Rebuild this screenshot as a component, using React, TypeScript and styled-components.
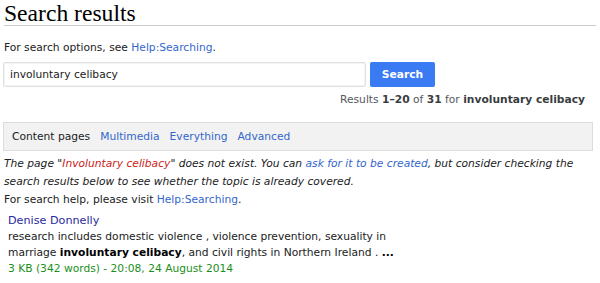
import React from "react";
import styled, { createGlobalStyle } from "styled-components";

const Global = createGlobalStyle`
  html, body { margin: 0; padding: 0; background: #fff; }
  body { font-family: "DejaVu Sans", sans-serif; font-size: 10.7px; color: #202122; }
`;

const Page = styled.div`
  padding: 0 4px 0 4px;
`;

const Heading = styled.h1`
  font-family: "Liberation Serif", "DejaVu Serif", serif;
  font-weight: normal;
  font-size: 23.6px;
  line-height: 24px;
  margin: 0;
  padding: 1px 0 0 0;
  height: 24px;
  border-bottom: 1px solid #c8ccd1;
  color: #000;
`;

const Para = styled.p`
  margin: 0;
  line-height: 17px;
`;

const Intro = styled(Para)`
  margin-top: 13px;
`;

const Link = styled.a<{ $tone?: "new" | "visited" }>`
  color: ${(p) => (p.$tone === "new" ? "#cc2222" : p.$tone === "visited" ? "#2a2a9e" : "#3366cc")};
  text-decoration: none;
`;

const SearchRow = styled.form`
  display: flex;
  gap: 4px;
  margin-top: 6px;
  margin-left: -1px;
`;

const Input = styled.input`
  box-sizing: border-box;
  width: 363px;
  height: 25px;
  border: 1px solid #e0e0e0;
  border-radius: 2px;
  padding: 0 6px;
  font-family: "DejaVu Sans", sans-serif;
  font-size: 10.7px;
  color: #202122;
  box-shadow: inset 0 0 0 1px #f4f4f4;
  outline: none;
`;

const Button = styled.button`
  box-sizing: border-box;
  width: 65px;
  height: 25px;
  border: none;
  border-radius: 2px;
  background: #3a7af3;
  color: #fff;
  font-family: "DejaVu Sans", sans-serif;
  font-size: 10.7px;
  font-weight: bold;
`;

const ResultInfo = styled.div`
  text-align: right;
  color: #54595d;
  line-height: 17px;
  margin-top: 4px;
  padding-right: 11px;
  b { color: #3a3d40; }
`;

const Tabs = styled.div`
  display: flex;
  gap: 10px;
  align-items: center;
  margin-top: 14px;
  margin-left: -1px;
  height: 27px;
  padding: 0 8px;
  background: #f2f2f2;
  border: 1px solid #dcdcdc;
  width: 572px;
`;

const Tab = styled.span<{ $active?: boolean }>`
  color: ${(p) => (p.$active ? "#202122" : "#3366cc")};
`;

const Notice = styled.div`
  margin-top: 4px;
`;

const Italic = styled(Para)`
  font-style: italic;
  line-height: 18px;
`;

const Result = styled.div`
  margin-top: 4px;
  padding-left: 4px;
`;

const Title = styled.div`
  font-size: 11.2px;
  line-height: 17px;
`;

const Snippet = styled.div`
  line-height: 16px;
  b { color: #000; }
`;

const Meta = styled.div`
  color: #1b8f1b;
  line-height: 16px;
`;

export default function App() {
  return (
    <>
      <Global />
      <Page>
        <Heading>Search results</Heading>
        <Intro>
          For search options, see <Link href="#">Help:Searching</Link>.
        </Intro>
        <SearchRow onSubmit={(e) => e.preventDefault()}>
          <Input defaultValue="involuntary celibacy" />
          <Button type="submit">Search</Button>
        </SearchRow>
        <ResultInfo>
          Results <b>1–20</b> of <b>31</b> for <b>involuntary celibacy</b>
        </ResultInfo>
        <Tabs>
          <Tab $active>Content pages</Tab>
          <Tab>Multimedia</Tab>
          <Tab>Everything</Tab>
          <Tab>Advanced</Tab>
        </Tabs>
        <Notice>
          <Italic>
            The page "<Link href="#" $tone="new">Involuntary celibacy</Link>" does not exist. You can{" "}
            <Link href="#">ask for it to be created</Link>, but consider checking the search results below to see whether the topic is already covered.
          </Italic>
          <Para>
            For search help, please visit <Link href="#">Help:Searching</Link>.
          </Para>
        </Notice>
        <Result>
          <Title>
            <Link href="#" $tone="visited">Denise Donnelly</Link>
          </Title>
          <Snippet>
            research includes domestic violence , violence prevention, sexuality in
            <br />
            marriage <b>involuntary celibacy</b>, and civil rights in Northern Ireland . <b>...</b>
          </Snippet>
          <Meta>3 KB (342 words) - 20:08, 24 August 2014</Meta>
        </Result>
      </Page>
    </>
  );
}
